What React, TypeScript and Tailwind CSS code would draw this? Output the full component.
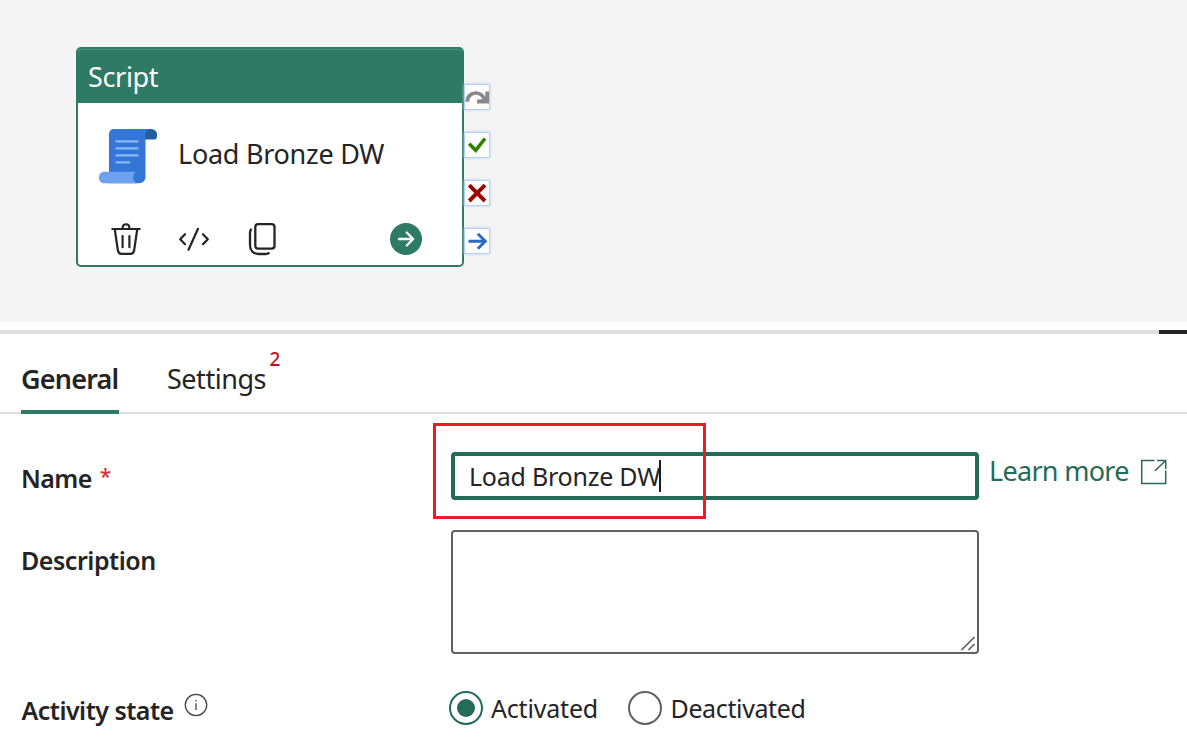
import React from "react";

function ScriptIcon() {
  return (
    <svg width="60" height="56" viewBox="98 128 60 56" className="mt-[2px] shrink-0">
      <path d="M114.500 129H152v10h-6.500v38c0 3.600-3 6.200-6.500 6.200H109V134.500c0-3.500 2-5.500 5.500-5.500Z" fill="#3277d8" />
      <path d="M145.300 139.500v-4.800c0-3.600 2.300-5.500 5.900-5.500 3.600 0 5.800 2.200 5.800 5.300v1.500c0 2.300-1 3.500-2.500 3.500Z" fill="#245ca3" />
      <path d="M104.500 171.700h31.200c-3.400 3.300-3.400 8.300 1 11.500h-32.200c-3.300 0-5.500-2.200-5.500-5.800 0-3.500 2.200-5.700 5.500-5.700Z" fill="#6fa1ee" />
      <path d="M115.600 141.300h22.800M115.600 148.300h22.800M115.600 155.400h22.800M115.600 162.400h14.600" stroke="#8bb9fa" strokeWidth="2.300" />
    </svg>
  );
}

function TrashIcon() {
  return (
    <svg width="32" height="32" viewBox="110 223 32 32" fill="none" stroke="#242424" strokeWidth="2.200" strokeLinecap="round" className="overflow-visible">
      <path d="M112.300 229h27.400M122.600 228.500c0-5.700 6.800-5.700 6.800 0M114.800 229.500l3 20.500c.4 2.600 1.700 3.900 4.100 3.900h8.200c2.400 0 3.700-1.300 4.100-3.900l3-20.500M122.600 236v11.200M129.400 236v11.200" />
    </svg>
  );
}

function CodeIcon() {
  return (
    <svg width="32" height="32" viewBox="178 223 32 32" fill="none" stroke="#242424" strokeWidth="2.200" strokeLinecap="round" strokeLinejoin="round">
      <path d="M185 234.200l-4.800 5 4.800 5M198 228.800l-9.500 21M203 234.200l4.800 5-4.800 5" />
    </svg>
  );
}

function CopyIcon() {
  return (
    <svg width="32" height="32" viewBox="246 223 32 32" fill="none" stroke="#242424" strokeWidth="2.300" className="overflow-visible">
      <rect x="255.300" y="224.200" width="19.200" height="24.400" rx="2.800" />
      <path d="M251.500 228.800c-1.200 1-1.500 2-1.500 3.700V245c0 5.500 3.500 9 9 9h6.500c1.700 0 2.900-.500 3.900-1.600" />
    </svg>
  );
}

function RunIcon() {
  return (
    <svg width="32" height="32" viewBox="390 223 32 32" fill="none" className="ml-auto">
      <circle cx="406" cy="239" r="16" fill="#2f7a65" />
      <path d="M399 239h14M406.700 232.500l6.500 6.500-6.500 6.500" stroke="#fff" strokeWidth="2.300" strokeLinecap="round" strokeLinejoin="round" />
    </svg>
  );
}

function Port({ children }: { children: React.ReactNode }) {
  return (
    <div className="size-6 bg-white shadow-[0_0_0_1px_#b5d0f5,0_0_3px_1px_#b9d2f2]">
      <svg width="24" height="24" viewBox="0 0 24 24" fill="none" className="block">{children}</svg>
    </div>
  );
}

function NodeCard() {
  return (
    <div className="h-[220px] w-[388px] shrink-0 overflow-hidden rounded-[5px] border-2 border-[#2f7a65] bg-white">
      <div className="h-[54px] border-t border-[#4d8e7c] bg-[#2f7a65] pl-[10px] text-[27px] leading-[54px] tracking-[-0.350px] text-white">Script</div>
      <div className="flex h-[103px] items-center pl-5">
        <ScriptIcon />
        <span className="-mt-[2px] ml-5 text-[27px] leading-[40px] tracking-[-0.270px]">Load Bronze DW</span>
      </div>
      <div className="mt-[17px] flex gap-9 pl-8 pr-10">
        <TrashIcon />
        <CodeIcon />
        <CopyIcon />
        <RunIcon />
      </div>
    </div>
  );
}

function Canvas() {
  return (
    <div className="flex h-[322px] bg-[#f4f4f4] pl-[76px] pt-[47px]">
      <NodeCard />
      <div className="ml-px flex flex-col gap-6 pt-[38px]">
        <Port>
          <path d="M2.300 16.800C2.300 11.500 6 8 10.800 8c3.900 0 6.700 2 8.700 6" stroke="#8a8886" strokeWidth="3.700" />
          <path d="M24 6.500v12H12v-4h4l4.300-3V6.500Z" fill="#8a8886" />
        </Port>
        <Port><path d="M4.200 10.700l6.500 6.600L20 5.500" stroke="#2a8000" strokeWidth="3.500" /></Port>
        <Port><path d="M4.200 4.200l15.800 15.800M20 4.200L4.200 20" stroke="#a00000" strokeWidth="3.900" /></Port>
        <Port><path d="M3.500 12.300H20M12.800 4.800l7.500 7.500-7.500 7.500" stroke="#2e6ac4" strokeWidth="2.900" /></Port>
      </div>
    </div>
  );
}

function Tabs() {
  return (
    <div className="flex h-20 border-b-2 border-[#dfdfdf] pl-[21px] text-[27px] leading-[89px]">
      <div className="h-20 w-[98px] border-b-4 border-[#2f7a65] font-semibold tracking-[-0.800px]">General</div>
      <div className="relative ml-12 tracking-[-0.470px]">
        Settings
        <span className="absolute left-[102.500px] top-[10px] text-[19px] font-medium leading-[30px] text-[#c50f1f]">2</span>
      </div>
    </div>
  );
}

function ExternalIcon() {
  return (
    <svg width="26" height="26" viewBox="1141 459 26 26" fill="none" stroke="#246b58" strokeWidth="1.500">
      <path d="M1154.500 460.500H1141.700v23h24V470.500M1157 460.500h8.700v8.500M1165.500 460.700l-10.500 10" />
    </svg>
  );
}

function InfoIcon() {
  return (
    <svg width="24" height="24" viewBox="0 0 24 24" fill="none" className="ml-[10px] mt-[2px] self-start">
      <circle cx="12" cy="12" r="10.700" stroke="#424242" strokeWidth="1.300" />
      <path d="M12 10.200V17M12 7v1.500" stroke="#424242" strokeWidth="1.300" />
    </svg>
  );
}

function Form() {
  return (
    <div className="pt-[38px] text-[25px]">
      <div className="flex h-[48px]">
        <label className="w-[430px] font-semibold leading-[52px] tracking-[-0.550px]">
          Name <span className="ml-[2px] inline-block -translate-y-1 text-[21px] font-medium leading-none text-[#d13438]">*</span>
        </label>
        <div className="relative flex w-[528px] items-center rounded-[4px] border-4 border-[#246b58] bg-white pl-[14px] tracking-[-0.230px]">
          <span className="pt-[2px]">Load Bronze DW</span>
          <span className="absolute left-[204px] top-1 h-8 w-[2px] bg-[#1b1b1b]" />
          <div className="absolute -left-[22px] -top-[33px] h-24 w-[273px] border-[3px] border-[#ee1b24]" />
        </div>
        <a className="ml-[10px] flex h-[37px] items-center text-[27px] tracking-[-0.700px] text-[#246b58]">
          <span className="w-[152px] pt-[2px]">Learn more</span>
          <span className="mt-[3px]"><ExternalIcon /></span>
        </a>
      </div>
      <div className="mt-[30px] flex h-[124px]">
        <label className="w-[430px] font-semibold leading-[61px] tracking-[-0.470px]">Description</label>
        <div className="flex w-[528px] items-end justify-end rounded-[4px] border-2 border-[#616161]">
          <svg width="17" height="17" viewBox="0 0 17 17" fill="none" stroke="#616161" strokeWidth="1.700">
            <path d="M1.500 15L14.500 2M8.500 15l6-6" />
          </svg>
        </div>
      </div>
      <div className="mt-[37px] flex h-[34px] items-center">
        <div className="flex h-[34px] w-[428px] items-center">
          <span className="pl-[0.500px] pt-[4px] font-semibold leading-[34px] tracking-[-0.530px]">Activity state</span>
          <InfoIcon />
        </div>
        <div className="flex size-[34px] items-center justify-center rounded-full border-2 border-[#246b58]">
          <div className="size-[18px] rounded-full bg-[#246b58]" />
        </div>
        <span className="ml-2 w-[137px] leading-[34px] tracking-[-0.180px]">Activated</span>
        <div className="size-[34px] rounded-full border-2 border-[#616161]" />
        <span className="ml-[8.500px] leading-[34px] tracking-[-0.370px]">Deactivated</span>
      </div>
    </div>
  );
}

export default function App() {
  return (
    <div className="h-[750px] w-[1187px] overflow-hidden whitespace-nowrap bg-white font-['Noto_Sans',sans-serif] text-[#242424]">
      <Canvas />
      <div className="mt-2 flex h-1 justify-end bg-[#dfdfdf]"><div className="w-7 bg-[#242424]" /></div>
      <Tabs />
      <div className="pl-[21px]"><Form /></div>
    </div>
  );
}
